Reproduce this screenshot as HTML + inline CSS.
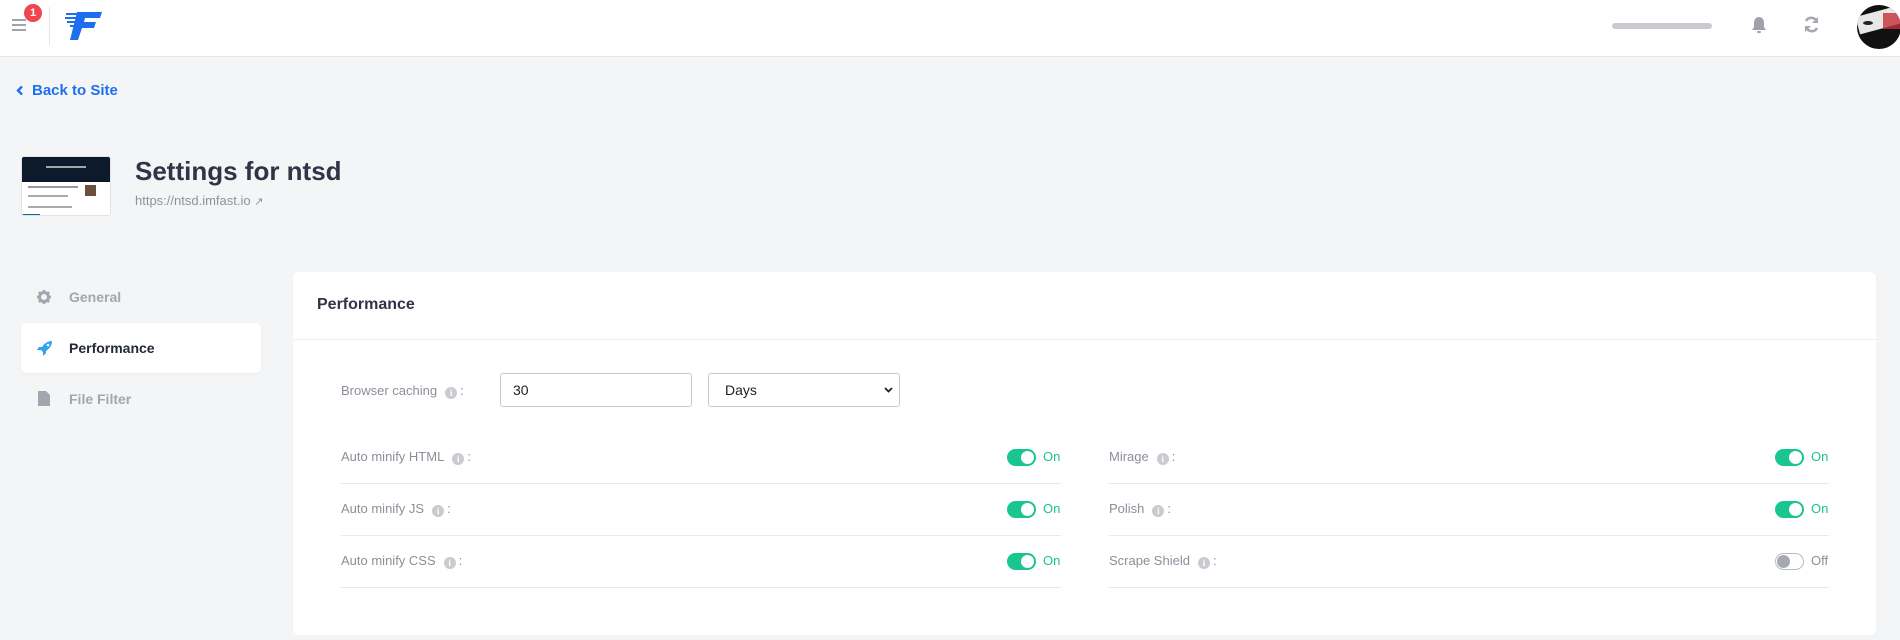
<!DOCTYPE html>
<html><head><meta charset="utf-8"><style>
*{box-sizing:border-box;margin:0;padding:0}
body{width:1900px;height:640px;overflow:hidden;background:#f4f5f7;font-family:"Liberation Sans",sans-serif;position:relative}
.abs{position:absolute}
.hdr{left:0;top:0;width:1900px;height:57px;background:#fff;border-bottom:1px solid #e6e7ea}
.card{left:293px;top:272px;width:1583px;height:363px;background:#fff;border-radius:6px}
.lbl{font-size:13px;color:#8b8f9a;line-height:16px;white-space:nowrap}
.info{display:inline-block;width:12px;height:12px;border-radius:50%;background:#c9cbd1;color:#fff;font-size:9px;line-height:12px;text-align:center;font-weight:bold;vertical-align:-1px;margin:0 3px 0 8px;font-family:"Liberation Serif",serif}
.tg{width:29px;height:17px;border-radius:9px;background:#19c68f}
.tg::after{content:"";position:absolute;right:2px;top:2px;width:13px;height:13px;border-radius:50%;background:#fff}
.tg.off{background:#fff;border:1px solid #b8bbc2}
.tg.off::after{left:1px;top:1px;right:auto;background:#a6a9b2}
.on{font-size:13px;color:#19c68f;line-height:16px}
.offt{font-size:13px;color:#8b8f9a;line-height:16px}
.line{height:1px;background:#e8e9ec}
.nav{font-size:14px;font-weight:bold;color:#a3a6ae}
</style></head><body>
<div class="abs hdr"></div>
<div class="abs" style="left:12px;top:19px;width:14px;height:2px;background:#a0a3ab"></div>
<div class="abs" style="left:12px;top:24px;width:14px;height:2px;background:#a0a3ab"></div>
<div class="abs" style="left:12px;top:29px;width:14px;height:2px;background:#a0a3ab"></div>
<div class="abs" style="left:24px;top:4px;width:18px;height:18px;border-radius:50%;background:#f0474f;color:#fff;font-size:11px;font-weight:bold;text-align:center;line-height:18px">1</div>
<div class="abs" style="left:49px;top:7px;width:1px;height:38px;background:#e4e5e8"></div>
<svg class="abs" style="left:64px;top:10px" width="40" height="32" viewBox="0 0 40 32">
<path d="M13 2 H38 L36 8 H21 L20 12 H32 L30 18 H18 L14 30 H6 Z" fill="#1e6ff0"/>
<rect x="2" y="3" width="11" height="2" fill="#1e6ff0"/><rect x="1" y="7" width="11" height="2" fill="#1e6ff0"/><rect x="3" y="11" width="9" height="2" fill="#1e6ff0"/><rect x="6" y="15" width="6" height="2" fill="#1e6ff0"/>
</svg>
<div class="abs" style="left:1612px;top:23px;width:100px;height:6px;border-radius:3px;background:#cacbd1"></div>
<svg class="abs" style="left:1751px;top:16px" width="16" height="18" viewBox="0 0 16 18"><path d="M8 1 C4.5 1 3 4 3 7 V11 L1 14 H15 L13 11 V7 C13 4 11.5 1 8 1Z" fill="#9fa2ab"/><rect x="6" y="15" width="4" height="2" rx="1" fill="#9fa2ab"/></svg>
<svg class="abs" style="left:1803px;top:16px" width="17" height="17" viewBox="0 0 17 17"><path d="M14 6 A6 6 0 0 0 3 5" stroke="#a6a9b1" stroke-width="2.6" fill="none"/><path d="M15 1 V7 H9Z" fill="#a6a9b1"/><path d="M3 11 A6 6 0 0 0 14 12" stroke="#a6a9b1" stroke-width="2.6" fill="none"/><path d="M2 16 V10 H8Z" fill="#a6a9b1"/></svg>
<div class="abs" style="left:1857px;top:5px;width:44px;height:44px;border-radius:50%;overflow:hidden;background:#111">
<div class="abs" style="left:0;top:6px;width:44px;height:18px;background:#e8e8e8;transform:rotate(-15deg)"></div>
<div class="abs" style="left:26px;top:8px;width:18px;height:16px;background:#c0303a;opacity:.8"></div>
<div class="abs" style="left:6px;top:16px;width:10px;height:4px;border-radius:50%;background:#222"></div>
</div>
<svg class="abs" style="left:16px;top:85px" width="8" height="11" viewBox="0 0 8 11"><path d="M6 1.5 L2 5.5 L6 9.5" stroke="#1e6ff0" stroke-width="2.4" fill="none"/></svg>
<div class="abs" style="left:32px;top:82px;font-size:15px;font-weight:bold;color:#1e6ff0">Back to Site</div>
<div class="abs" style="left:21px;top:156px;width:90px;height:60px;border-radius:3px;overflow:hidden;background:#fff;border:1px solid #e2e3e6">
<div style="height:25px;background:#0d1a2c"></div>
<div class="abs" style="left:24px;top:9px;width:40px;height:2px;background:#9aa"></div>
<div class="abs" style="left:6px;top:29px;width:50px;height:2px;background:#999"></div>
<div class="abs" style="left:6px;top:38px;width:40px;height:2px;background:#aaa"></div>
<div class="abs" style="left:6px;top:49px;width:44px;height:2px;background:#aaa"></div>
<div class="abs" style="left:63px;top:28px;width:11px;height:11px;background:#6b5040"></div>
<div class="abs" style="left:0;top:57px;width:18px;height:3px;background:#0e6e8c"></div>
</div>
<div class="abs" style="left:135px;top:156px;font-size:26px;font-weight:bold;color:#2f3447">Settings for ntsd</div>
<div class="abs" style="left:135px;top:193px;font-size:13px;color:#8e929c">https://ntsd.imfast.io <span style="font-size:11px">&#8599;</span></div>
<svg class="abs" style="left:37px;top:290px" width="14" height="14" viewBox="0 0 14 14"><circle cx="7" cy="7" r="4.5" fill="none" stroke="#a3a6ae" stroke-width="3"/><g stroke="#a3a6ae" stroke-width="2.5"><path d="M7 0V3M7 11V14M0 7H3M11 7H14M2 2L4 4M10 10L12 12M12 2L10 4M4 10L2 12"/></g></svg>
<div class="abs nav" style="left:69px;top:289px">General</div>
<div class="abs" style="left:21px;top:323px;width:240px;height:50px;background:#fff;border-radius:5px;box-shadow:0 1px 3px rgba(0,0,0,.04)"></div>
<svg class="abs" style="left:37px;top:340px" width="16" height="16" viewBox="0 0 16 16"><path d="M15 1 C10 1 7 4 5 7 L2 7 L0 10 L4 10 L6 12 L6 16 L9 13 L9 11 C12 9 15 6 15 1Z" fill="#2fa3f0"/><circle cx="11" cy="5" r="1.3" fill="#fff"/></svg>
<div class="abs" style="left:69px;top:340px;font-size:14px;font-weight:bold;color:#23283a">Performance</div>
<svg class="abs" style="left:38px;top:391px" width="12" height="15" viewBox="0 0 12 15"><path d="M0 0H8L12 4V15H0Z" fill="#a3a6ae"/></svg>
<div class="abs nav" style="left:69px;top:391px">File Filter</div>
<div class="abs card"></div>
<div class="abs" style="left:317px;top:296px;font-size:16px;font-weight:bold;color:#2f3447">Performance</div>
<div class="abs line" style="left:293px;top:339px;width:1583px;background:#eceef1"></div>
<div class="abs lbl" style="left:341px;top:383px">Browser caching<span class="info">i</span>:</div>
<div class="abs" style="left:500px;top:373px;width:192px;height:34px;border:1px solid #c9cbd0;border-radius:3px;background:#fff;font-size:14px;color:#222;padding:8px 12px">30</div>
<div class="abs" style="left:708px;top:373px;width:192px;height:34px;border:1px solid #c9cbd0;border-radius:3px;background:#fff;font-size:14px;color:#222;padding:8px 16px">Days<svg style="position:absolute;right:6px;top:13px" width="9" height="6" viewBox="0 0 9 6"><path d="M1 1 L4.5 4.5 L8 1" stroke="#222" stroke-width="1.8" fill="none"/></svg></div>

<div class="abs lbl" style="left:341px;top:449px">Auto minify HTML<span class="info">i</span>:</div>
<div class="abs tg" style="left:1007px;top:449px"></div><div class="abs on" style="left:1043px;top:449px">On</div>
<div class="abs line" style="left:341px;top:483px;width:720px"></div>
<div class="abs lbl" style="left:341px;top:501px">Auto minify JS<span class="info">i</span>:</div>
<div class="abs tg" style="left:1007px;top:501px"></div><div class="abs on" style="left:1043px;top:501px">On</div>
<div class="abs line" style="left:341px;top:535px;width:720px"></div>
<div class="abs lbl" style="left:341px;top:553px">Auto minify CSS<span class="info">i</span>:</div>
<div class="abs tg" style="left:1007px;top:553px"></div><div class="abs on" style="left:1043px;top:553px">On</div>
<div class="abs line" style="left:341px;top:587px;width:720px"></div>

<div class="abs lbl" style="left:1109px;top:449px">Mirage<span class="info">i</span>:</div>
<div class="abs tg" style="left:1775px;top:449px"></div><div class="abs on" style="left:1811px;top:449px">On</div>
<div class="abs line" style="left:1109px;top:483px;width:720px"></div>
<div class="abs lbl" style="left:1109px;top:501px">Polish<span class="info">i</span>:</div>
<div class="abs tg" style="left:1775px;top:501px"></div><div class="abs on" style="left:1811px;top:501px">On</div>
<div class="abs line" style="left:1109px;top:535px;width:720px"></div>
<div class="abs lbl" style="left:1109px;top:553px">Scrape Shield<span class="info">i</span>:</div>
<div class="abs tg off" style="left:1775px;top:553px"></div><div class="abs offt" style="left:1811px;top:553px">Off</div>
<div class="abs line" style="left:1109px;top:587px;width:720px"></div>
</body></html>
